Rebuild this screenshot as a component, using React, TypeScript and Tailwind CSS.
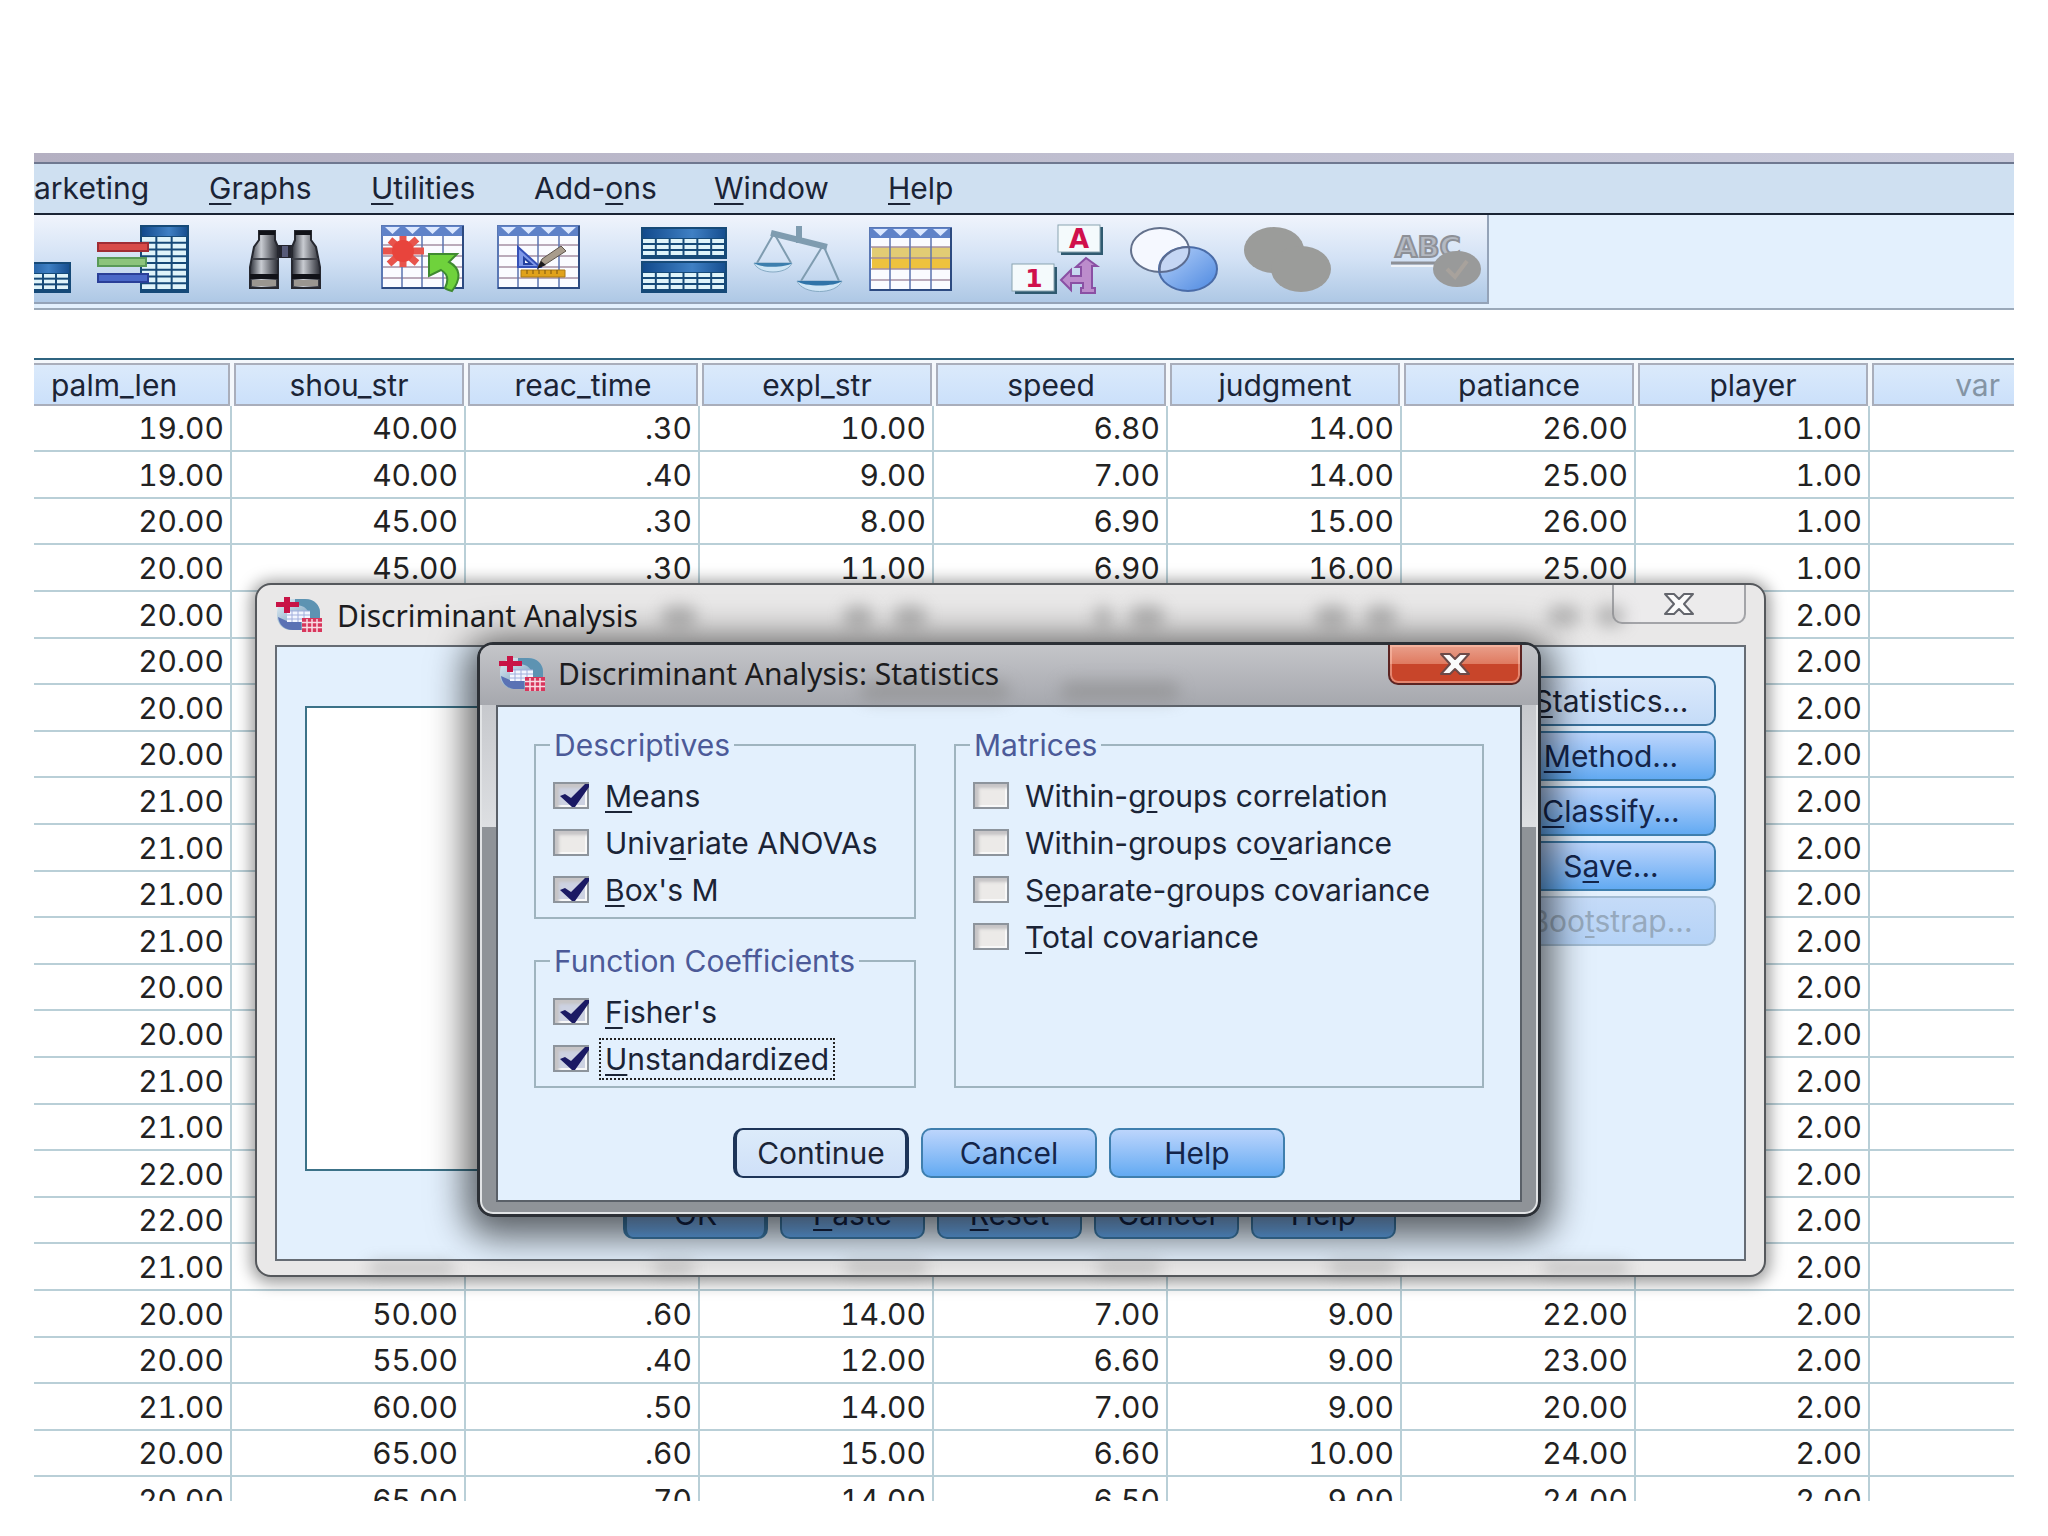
import React from "react";

const menus = ["arketing", "&Graphs", "&Utilities", "Add-&ons", "&Window", "&Help"];

const columns = [
  "palm_len",
  "shou_str",
  "reac_time",
  "expl_str",
  "speed",
  "judgment",
  "patiance",
  "player",
];

// Rows with null are covered by the open dialogs, only the outer columns show
const covered = null;

const rows: [string, string[] | null, string][] = [
  ["19.00", ["40.00", ".30", "10.00", "6.80", "14.00", "26.00"], "1.00"],
  ["19.00", ["40.00", ".40", "9.00", "7.00", "14.00", "25.00"], "1.00"],
  ["20.00", ["45.00", ".30", "8.00", "6.90", "15.00", "26.00"], "1.00"],
  ["20.00", ["45.00", ".30", "11.00", "6.90", "16.00", "25.00"], "1.00"],
  ["20.00", covered, "2.00"],
  ["20.00", covered, "2.00"],
  ["20.00", covered, "2.00"],
  ["20.00", covered, "2.00"],
  ["21.00", covered, "2.00"],
  ["21.00", covered, "2.00"],
  ["21.00", covered, "2.00"],
  ["21.00", covered, "2.00"],
  ["20.00", covered, "2.00"],
  ["20.00", covered, "2.00"],
  ["21.00", covered, "2.00"],
  ["21.00", covered, "2.00"],
  ["22.00", covered, "2.00"],
  ["22.00", covered, "2.00"],
  ["21.00", covered, "2.00"],
  ["20.00", ["50.00", ".60", "14.00", "7.00", "9.00", "22.00"], "2.00"],
  ["20.00", ["55.00", ".40", "12.00", "6.60", "9.00", "23.00"], "2.00"],
  ["21.00", ["60.00", ".50", "14.00", "7.00", "9.00", "20.00"], "2.00"],
  ["20.00", ["65.00", ".60", "15.00", "6.60", "10.00", "24.00"], "2.00"],
  ["20.00", ["65.00", ".70", "14.00", "6.50", "9.00", "24.00"], "2.00"],
];

// "&" marks the letter that is underlined as the keyboard mnemonic
const Mnemonic = ({ text }: { text: string }) => {
  const at = text.indexOf("&");
  if (at < 0) return <>{text}</>;
  return (
    <>
      {text.slice(0, at)}
      <u className="decoration-2 underline-offset-4">{text[at + 1]}</u>
      {text.slice(at + 2)}
    </>
  );
};

/* ---------- Toolbar icons ---------- */

const Defs = () => (
  <svg width="0" height="0" className="absolute" aria-hidden="true">
    <defs>
      <linearGradient id="head" x1="0" x2="1">
        <stop offset="0" stopColor="#124a8c" />
        <stop offset="0.6" stopColor="#3f80c4" />
        <stop offset="1" stopColor="#174f90" />
      </linearGradient>
      <linearGradient id="barrel" x1="0" x2="1">
        <stop offset="0" stopColor="#2c2f38" />
        <stop offset="0.4" stopColor="#c9ccd2" />
        <stop offset="1" stopColor="#2a2c34" />
      </linearGradient>
      <linearGradient id="blueDisc" x1="0" x2="1" y1="0" y2="1">
        <stop offset="0" stopColor="#b9d3fa" />
        <stop offset="1" stopColor="#4c88e0" />
      </linearGradient>
      <linearGradient id="orb" x1="0" x2="1" y1="0" y2="1">
        <stop offset="0" stopColor="#e8f2f8" />
        <stop offset="1" stopColor="#4f82a8" />
      </linearGradient>
    </defs>
  </svg>
);

type BlockProps = { x: number; y: number; w: number; h: number; head: number; cols: number; lines: number };

// Dark blue table: solid heading with white cells below
const Block = ({ x, y, w, h, head, cols, lines }: BlockProps) => {
  const cw = (w - 3) / cols;
  const ch = (h - head - 2) / lines;
  return (
    <g>
      <rect x={x} y={y} width={w} height={h} fill="#164a78" />
      <rect x={x + 2} y={y + 2} width={w - 4} height={head - 3} fill="url(#head)" />
      {Array.from({ length: cols * lines }, (_, i) => (
        <rect
          key={i}
          x={x + 2 + (i % cols) * cw}
          y={y + head + Math.floor(i / cols) * ch}
          width={cw - 2}
          height={ch - 2}
          fill="#dff4fa"
        />
      ))}
    </g>
  );
};

// Light spreadsheet with blue drop-down heads
const Sheet = ({ band }: { band?: boolean }) => (
  <g>
    <rect x="1" y="1" width="81" height="62" fill="#fafbff" stroke="#5a78b4" strokeWidth="2" />
    <rect x="1" y="1" width="81" height="10" fill="#5f82c8" />
    {[0, 1, 2, 3].map((i) => (
      <path key={i} d={`M${4 + i * 20} 2h15l-7.500 7z`} fill="#dce8ff" />
    ))}
    {band && <rect x="3" y="20" width="78" height="22" fill="#eec23e" />}
    {band && <rect x="3" y="20" width="78" height="10" fill="#e2cc74" />}
    <path d="M2 20h80M2 31h80M2 42h80M2 53h80" stroke="#a590a4" strokeWidth="1.500" />
    <path d="M21 11v51M41 11v51M62 11v51" stroke="#5c74b0" strokeWidth="1.500" />
    <path d="M82 1v62H1" fill="none" stroke="#2c4a80" strokeWidth="2" />
  </g>
);

const TableIcon = () => (
  <svg width="37" height="68" viewBox="0 0 37 68">
    <Block x={-18} y={37} w={55} h={31} head={12} cols={4} lines={3} />
  </svg>
);

const VariablesIcon = () => (
  <svg width="92" height="68" viewBox="0 0 92 68">
    <Block x={43} y={0} w={49} h={68} head={12} cols={3} lines={8} />
    <rect x="1" y="18" width="50" height="8" fill="#d84a48" stroke="#a02c34" strokeWidth="2" />
    <rect x="1" y="33" width="48" height="8" fill="#8cc47c" stroke="#5a9a58" strokeWidth="2" />
    <rect x="1" y="49" width="50" height="8" fill="#4a68c8" stroke="#2a3f98" strokeWidth="2" />
  </svg>
);

const BinocularsIcon = () => (
  <svg width="72" height="68" viewBox="0 0 72 68">
    <path d="M26 20h20v13H26z" fill="#23242e" />
    <path d="M33 21h6v11h-6z" fill="#565a78" />
    <path d="M10 6h16v9l3 7v41H1V42l4-20 5-7z" fill="url(#barrel)" stroke="#262830" strokeWidth="2" />
    <path d="M46 6h16v9l5 7 4 20v21H43V22l3-7z" fill="url(#barrel)" stroke="#262830" strokeWidth="2" />
    <path d="M10 6h16v4H10zM46 6h16v4H46zM1 49h28v5H1zM43 49h28v5H43z" fill="#111218" />
    <path d="M3 34h26M43 34h26" stroke="#3d4048" strokeWidth="2" />
    <path d="M3 55h24v6H3zM45 55h24v6H45z" fill="#9a9690" />
  </svg>
);

const GoToCaseIcon = () => (
  <svg width="84" height="68" viewBox="0 0 84 68">
    <Sheet />
    <g stroke="#e8544c" strokeWidth="7">
      <path d="M22 11v31M2 26h41M9 15l27 23M36 14L8 39" />
    </g>
    <circle cx="22" cy="26" r="11" fill="#e8443c" />
    <path d="M48 29h28l-8 8c11 6 13 16 3 29-4-1-6-2-7-3 4-8 3-14-4-18l-12 6z" fill="#6fd23c" stroke="#3f8a30" strokeWidth="2" />
  </svg>
);

const DesignIcon = () => (
  <svg width="90" height="68" viewBox="-6 0 90 68">
    <Sheet />
    <path d="M21 22l22 20H21z" fill="#7f98e8" stroke="#3450b8" strokeWidth="2" />
    <path d="M27 33l7 6h-7z" fill="#f6f8ff" stroke="#2340a0" strokeWidth="2" />
    <path d="M24 45h44v7H24z" fill="#e0a21c" stroke="#a87818" strokeWidth="1" />
    <path d="M30 45v4M36 45v4M42 45v4M48 45v4M54 45v4M60 45v4" stroke="#7a5410" />
    <path d="M41 42l4-8 19-13 5 5-20 13z" fill="#a89c8c" stroke="#5d544c" strokeWidth="1" />
    <path d="M40 44l4-8 5 4z" fill="#1c1a1c" />
  </svg>
);

const SplitIcon = () => (
  <svg width="86" height="68" viewBox="0 0 86 68">
    <Block x={0} y={2} w={86} h={32} head={12} cols={6} lines={3} />
    <Block x={0} y={36} w={86} h={32} head={12} cols={6} lines={3} />
  </svg>
);

const WeightIcon = () => (
  <svg width="90" height="68" viewBox="0 0 90 68">
    <g fill="none" stroke="#7f9cb0">
      <path d="M18 8l56 14M46 1v17" strokeWidth="6" />
      <path d="M20 10L4 38M22 10l16 28M69 22L48 56M71 22l15 34" strokeWidth="2" />
    </g>
    <path d="M1 38h38c-5 12-33 12-38 0z" fill="#cfe6f6" stroke="#86aac4" />
    <path d="M1 38h38c-6 5-32 5-38 0z" fill="#3d7fae" />
    <path d="M44 56h45c-6 14-39 14-45 0z" fill="#cfe6f6" stroke="#86aac4" />
    <path d="M44 56h45c-7 6-38 6-45 0z" fill="#2f74a8" />
  </svg>
);

const SelectCasesIcon = () => (
  <svg width="83" height="68" viewBox="0 -2 83 68">
    <Sheet band />
  </svg>
);

const ValueLabelsIcon = () => (
  <svg width="92" height="68" viewBox="0 0 92 68" className="overflow-visible">
    <rect x="49" y="2" width="42" height="28" fill="#2f5a70" />
    <rect x="46" y="0" width="42" height="27" fill="#f4fafc" stroke="#8aa4b0" />
    <text x="67" y="23" textAnchor="middle" fontFamily="DejaVu Sans, sans-serif" fontWeight="bold" fontSize="26" fill="#d0104c">A</text>
    <rect x="3" y="42" width="42" height="27" fill="#2f5a70" />
    <rect x="0" y="39" width="42" height="27" fill="#f4fafc" stroke="#8aa4b0" />
    <text x="22" y="62" textAnchor="middle" fontFamily="DejaVu Sans, sans-serif" fontWeight="bold" fontSize="25" fill="#d0104c">1</text>
    <path d="M49 55l10-10v6h10V42h-5l10-9 11 8h-5v22h3v5H69v-5h2v-5H59v7z" fill="#bc8ccc" stroke="#8a50a4" strokeWidth="2" />
  </svg>
);

const UseSetsIcon = () => (
  <svg width="88" height="68" viewBox="0 0 88 68">
    <ellipse cx="30" cy="25" rx="29" ry="22" fill="#f5f8ff" stroke="#63718c" strokeWidth="2" />
    <ellipse cx="58" cy="44" rx="29" ry="22" fill="url(#blueDisc)" stroke="#4a6ca8" strokeWidth="2" />
    <path d="M30 47a29 22 0 0 1 29-25 29 22 0 0 1-29 25z" fill="#c5d6f4" stroke="#5c6c90" strokeWidth="2" />
  </svg>
);

const ShowAllIcon = () => (
  <svg width="87" height="68" viewBox="0 0 87 68">
    <g fill="#9b9c9a">
      <ellipse cx="30" cy="25" rx="30" ry="23" />
      <ellipse cx="57" cy="44" rx="30" ry="23" />
    </g>
  </svg>
);

const SpellingIcon = () => (
  <svg width="92" height="68" viewBox="0 0 92 68">
    <text x="4" y="32" fontFamily="DejaVu Sans, sans-serif" fontWeight="bold" fontSize="29" fill="#b4b9c2" stroke="#8d9097" strokeWidth="2">ABC</text>
    <path d="M0 38h56" stroke="#8d9097" strokeWidth="3" />
    <path d="M0 41h46" stroke="#eef2f8" strokeWidth="2" />
    <ellipse cx="66" cy="44" rx="24" ry="18" fill="#999a9a" />
    <path d="M56 44l8 8 12-16" fill="none" stroke="#a8a29c" strokeWidth="4" />
  </svg>
);

const toolGroups: [string, React.FC][][] = [
  [["Recent dialogs", TableIcon], ["Variables", VariablesIcon]],
  [["Find", BinocularsIcon]],
  [["Go to case", GoToCaseIcon], ["Go to variable", DesignIcon]],
  [["Split file", SplitIcon], ["Weight cases", WeightIcon], ["Select cases", SelectCasesIcon]],
  [["Value labels", ValueLabelsIcon], ["Use variable sets", UseSetsIcon], ["Show all variables", ShowAllIcon]],
  [["Spell check", SpellingIcon]],
];

/* ---------- Dialog parts ---------- */

const AppIcon = () => (
  <svg width="48" height="36" viewBox="0 0 48 36" className="shrink-0" aria-hidden="true">
    <rect x="2" y="2" width="43" height="31" rx="14" fill="url(#orb)" />
    <path d="M20 2h10c9 0 15 6 15 14v6H34c1-9-4-14-14-14z" fill="#5d93b2" />
    <path d="M3 20c1 8 7 13 15 13h8v-8H14z" fill="#5a72b4" />
    <path d="M12 14h23v11H12z" fill="#f2f6ff" />
    <path d="M12 14h23M12 18h23M12 22h16M17 13v12M23 13v12M29 13v8" stroke="#a0aedc" strokeWidth="1" />
    <path d="M9 0h6v5h9v5h-9v6H9v-6H1V5h8z" fill="#c81446" />
    <path d="M27 21h20v14H27z" fill="#d8365c" />
    <path d="M27 25.500h20M27 30.500h20M32 22v13M37 22v13M42 22v13" stroke="#f8dce4" strokeWidth="1.500" />
  </svg>
);

const CloseGlyph = ({ stroke }: { stroke: string }) => (
  <svg width="32" height="22" viewBox="0 0 32 22" aria-hidden="true">
    <path
      d="M2 1h9l5 5 5-5h9l-9 10 9 10h-9l-5-5-5 5H2l9-10z"
      fill="#fbfbfb"
      stroke={stroke}
      strokeWidth="2"
      strokeLinejoin="round"
    />
  </svg>
);

// Table digits that shine through the glass frame
const Smudges = ({ className, spots }: { className: string; spots: string[] }) => (
  <div className={`pointer-events-none absolute inset-x-0 ${className}`} aria-hidden="true">
    {spots.map((spot) => (
      <span key={spot} className={`absolute h-full rounded-full bg-[#858585] opacity-50 blur-[8px] ${spot}`} />
    ))}
  </div>
);

const tones = {
  blue: "border-[#3f7fae] bg-linear-to-b from-[#bcd5fc] to-[#62aaf2] text-[#14254a]",
  light: "border-[#38719c] bg-linear-to-b from-[#dbe9fb] to-[#c5dcf8] text-[#1b2436]",
  focus: "border-x-[4px] border-[#1d3458] bg-linear-to-b from-[#dcebfa] to-[#cfe0f8] text-[#1b2436]",
  faded: "border-[#a3bcd3] bg-linear-to-b from-[#c5dbf8] to-[#b5d3f7] text-[#96a9bd]",
};

type ButtonProps = { label: string; tone?: keyof typeof tones; className?: string };

const PushButton = ({ label, tone = "blue", className = "" }: ButtonProps) => (
  <button
    type="button"
    disabled={tone === "faded"}
    className={`h-[50px] rounded-[10px] border-2 whitespace-nowrap ${tones[tone]} ${className}`}
  >
    <Mnemonic text={label} />
  </button>
);

type CheckProps = { label: string; checked?: boolean; focused?: boolean };

const CheckRow = ({ label, checked, focused }: CheckProps) => (
  <label className="ml-[3px] flex h-[47px] items-center gap-[10px] whitespace-nowrap">
    <span className="grid">
      <input
        type="checkbox"
        defaultChecked={checked}
        className="peer col-start-1 row-start-1 h-[27px] w-9 appearance-none border-2 border-[#8d949c] bg-[#eceae8] shadow-[inset_4px_4px_3px_#c6c4c6,inset_-2px_-2px_0_#f8f8f8] checked:bg-[#cdd2e2]"
      />
      <svg
        width="36"
        height="27"
        viewBox="0 0 36 27"
        className="pointer-events-none invisible col-start-1 row-start-1 peer-checked:visible"
        aria-hidden="true"
      >
        <path d="M7 14l5-2 6 4L32 2h4v3L22 25h-3z" fill="#1b1a64" />
      </svg>
    </span>
    <span className={`border-2 border-dotted px-1 leading-[38px] ${focused ? "border-[#222]" : "border-transparent"}`}>
      <Mnemonic text={label} />
    </span>
  </label>
);

type GroupProps = { title: string; children: React.ReactNode };

const Group = ({ title, children }: GroupProps) => (
  <fieldset className="min-w-0 border-2 border-[#9fb4bf] pb-1 pl-[14px]">
    <legend className="mb-[9px] px-1 leading-9 text-[#4c5a98]">{title}</legend>
    {children}
  </fieldset>
);

const StatisticsDialog = () => (
  <section
    role="dialog"
    aria-label="Discriminant Analysis: Statistics"
    className="absolute top-[489px] left-[443px] w-[1064px] rounded-[16px] border-[3px] border-[#2c3036] bg-linear-to-b from-[#bcbec3] from-0% via-[#dddfe2] via-[32%] to-[#8f9398] to-[32%] px-4 pb-3 shadow-[inset_0_0_0_2px_#e2e4e6,0_8px_36px_12px_rgba(0,0,0,0.6)]"
  >
    <div className="-mx-4 flex h-[60px] items-start rounded-t-[12px] bg-linear-to-b from-[#c4c5c9] to-[#a6a8ae] pr-4 pl-[18px]">
      <Smudges className="top-[36px] h-[20px]" spots={["left-[580px] w-[120px]", "left-[380px] w-[150px]"]} />
      <div className="flex h-[57px] flex-1 items-center gap-3">
        <AppIcon />
        <h2 className="relative text-[30px] text-[#1c1c1e] [font-family:'Noto_Sans',sans-serif]">
          Discriminant Analysis: Statistics
        </h2>
      </div>
      <button
        type="button"
        aria-label="Close"
        className="flex h-[40px] w-[134px] items-center justify-center rounded-b-[10px] border-2 border-t-0 border-[#5c2422] bg-linear-to-b from-[#e9a08c] from-0% via-[#df7a60] via-50% to-[#c8452a] to-50% shadow-[inset_0_0_0_2px_rgba(255,200,180,0.5)]"
      >
        <CloseGlyph stroke="#6d4a48" />
      </button>
    </div>

    <form className="border-2 border-[#5a6068] bg-[#e3f0fd] px-9 pt-5 pb-[22px]">
      <div className="grid grid-cols-[382px_1fr] gap-[38px]">
        <div className="flex flex-col gap-6">
          <Group title="Descriptives">
            <CheckRow label="&Means" checked />
            <CheckRow label="Univ&ariate ANOVAs" />
            <CheckRow label="&Box's M" checked />
          </Group>
          <Group title="Function Coefficients">
            <CheckRow label="&Fisher's" checked />
            <CheckRow label="&Unstandardized" checked focused />
          </Group>
        </div>
        <Group title="Matrices">
          <CheckRow label="Within-g&roups correlation" />
          <CheckRow label="Within-groups co&variance" />
          <CheckRow label="S&eparate-groups covariance" />
          <CheckRow label="&Total covariance" />
        </Group>
      </div>
      <div className="mt-10 flex justify-center gap-3">
        <PushButton label="Continue" tone="focus" className="w-[176px]" />
        <PushButton label="Cancel" className="w-[176px]" />
        <PushButton label="Help" className="w-[176px]" />
      </div>
    </form>
  </section>
);

const AnalysisDialog = () => (
  <section
    role="dialog"
    aria-label="Discriminant Analysis"
    className="absolute top-[430px] left-[221px] w-[1511px] rounded-[16px] border-2 border-[#55585c] bg-[#e9e8e8] px-[18px] pb-[14px] shadow-[0_2px_16px_4px_rgba(0,0,0,0.4)]"
  >
    <Smudges
      className="top-[20px] h-[22px]"
      spots={["left-[404px] w-[36px]", "left-[586px] w-[30px]", "left-[636px] w-[34px]", "left-[838px] w-[16px]", "left-[872px] w-[36px]", "left-[1058px] w-[34px]", "left-[1108px] w-[32px]", "left-[1290px] w-[34px]", "left-[1338px] w-[30px]"]}
    />
    <Smudges
      className="bottom-[2px] h-[10px]"
      spots={["left-[112px] w-[86px]", "left-[396px] w-[42px]", "left-[588px] w-[82px]", "left-[840px] w-[64px]", "left-[1072px] w-[66px]", "left-[1286px] w-[86px]"]}
    />
    <div className="flex items-start">
      <div className="flex h-[60px] flex-1 items-center gap-[14px]">
        <AppIcon />
        <h2 className="relative text-[30px] text-[#1c1c1e] [font-family:'Noto_Sans',sans-serif]">Discriminant Analysis</h2>
      </div>
      <button
        type="button"
        aria-label="Close"
        className="flex h-[39px] w-[134px] items-center justify-center rounded-b-[10px] border-2 border-t-0 border-[#a3a4a8] bg-[#ececee]/70"
      >
        <CloseGlyph stroke="#63656c" />
      </button>
    </div>

    <div className="border-2 border-[#666c74] bg-[#e3f0fd] pb-5">
      <div className="flex items-start gap-6 pl-[28px] pr-[28px] pt-[29px]">
        <div className="mt-[30px] h-[465px] flex-1 border-2 border-[#3c7288] bg-white" />
        <div className="flex w-[210px] flex-col gap-[5px]">
          <PushButton label="&Statistics..." tone="light" />
          <PushButton label="&Method..." />
          <PushButton label="&Classify..." />
          <PushButton label="S&ave..." />
          <PushButton label="Boo&tstrap..." tone="faded" />
        </div>
      </div>
      <div className="mt-[18px] flex gap-3 pl-[346px]">
        <PushButton label="OK" className="w-[145px] border-x-[4px] border-[#1d3458]" />
        <PushButton label="&Paste" className="w-[145px]" />
        <PushButton label="&Reset" className="w-[145px]" />
        <PushButton label="Cancel" className="w-[145px]" />
        <PushButton label="Help" className="w-[145px]" />
      </div>
    </div>
  </section>
);

const DataTable = () => (
  <table className="w-full table-fixed border-separate border-spacing-0 tabular-nums">
    <colgroup>
      <col className="w-[198px]" />
      {columns.slice(1).map((name) => (
        <col key={name} className="w-[234px]" />
      ))}
      <col />
    </colgroup>
    <thead>
      <tr>
        {columns.map((name, index) => (
          <th key={name} className="bg-[#f4f8fc] p-0 pt-[3px] pr-[2px] font-normal">
            <span
              className={`block h-[43px] border-2 border-[#a9aebb] bg-linear-to-b from-[#dbeafb] to-[#cbe0fa] leading-[41px] ${
                index === 0 ? "border-l-0 pr-[34px]" : "ml-[2px]"
              }`}
            >
              {name}
            </span>
          </th>
        ))}
        <th className="bg-[#f4f8fc] p-0 pt-[3px] font-normal">
          <span className="ml-[2px] block h-[43px] border-2 border-r-0 border-[#a9aebb] bg-linear-to-b from-[#dbeafb] to-[#cbe0fa] pr-[14px] text-right leading-[41px] text-[#8494a4]">
            var
          </span>
        </th>
      </tr>
    </thead>
    <tbody>
      {rows.map(([first, middle, last], r) => (
        <tr key={r} className="h-[47px] nth-[5n+1]:h-[46px] nth-[5n+3]:h-[46px]">
          {[first, ...(middle ?? Array(6).fill("")), last, ""].map((value, c) => (
            <td
              key={c}
              className="border-r-2 border-b-2 border-[#b9cfd7] p-0 pr-[6px] text-right leading-[36px] text-[#222] last:border-r-0"
            >
              {value}
            </td>
          ))}
        </tr>
      ))}
    </tbody>
  </table>
);

const App: React.FC = () => {
  return (
    <main className="flex h-screen flex-col bg-white px-[34px] pt-[153px] pb-[35px] text-[30px] text-[#1b2436] [font-family:Inter,'Liberation_Sans',sans-serif]">
      <Defs />
      <div className="relative min-h-0 flex-1 overflow-hidden">
        {/* Menu bar */}
        <div className="h-[9px] bg-linear-to-r from-[#b4b0c2] to-[#c9cbdc]" />
        <nav className="grid h-[53px] grid-cols-[175px_162px_163px_180px_174px_1fr] items-center border-y-2 border-t-[#6f7890] border-b-[#1a2434] bg-[#cfe0f1]">
          {menus.map((menu) => (
            <a key={menu} href="#menu">
              <Mnemonic text={menu} />
            </a>
          ))}
        </nav>

        {/* Toolbar */}
        <div className="border-b-2 border-[#9ba9b9] bg-[#e3f0fd] pb-1">
          <div className="flex h-[89px] w-[1455px] items-start gap-[60px] border-r-2 border-b-2 border-[#94a3b8] bg-linear-to-b from-[#f0f4fc] via-[#d3e2f5] to-[#aec8e5] pt-[10px]">
            {toolGroups.map((group, g) => (
              <div key={g} className="flex gap-[26px]">
                {group.map(([name, Icon]) => (
                  <button key={name} type="button" aria-label={name}>
                    <Icon />
                  </button>
                ))}
              </div>
            ))}
          </div>
        </div>

        {/* Data editor */}
        <div className="mt-12 border-t-2 border-[#2f6480]">
          <DataTable />
        </div>

        <AnalysisDialog />
        <StatisticsDialog />
      </div>
    </main>
  );
};

export default App;
